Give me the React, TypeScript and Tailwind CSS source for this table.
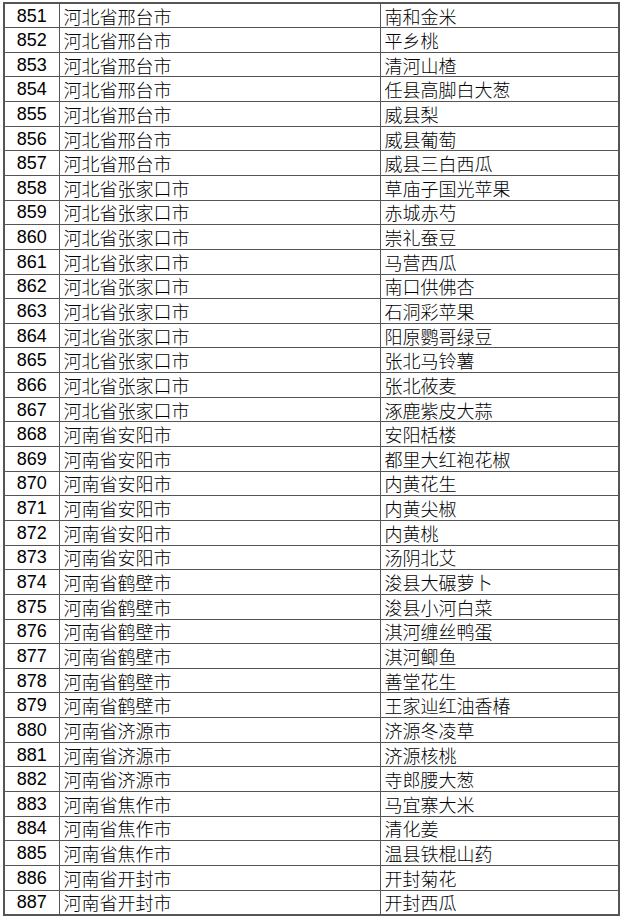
import React from 'react';

const rows: [number, string, string][] = [
    [851, '河北省邢台市', '南和金米'],
    [852, '河北省邢台市', '平乡桃'],
    [853, '河北省邢台市', '清河山楂'],
    [854, '河北省邢台市', '任县高脚白大葱'],
    [855, '河北省邢台市', '威县梨'],
    [856, '河北省邢台市', '威县葡萄'],
    [857, '河北省邢台市', '威县三白西瓜'],
    [858, '河北省张家口市', '草庙子国光苹果'],
    [859, '河北省张家口市', '赤城赤芍'],
    [860, '河北省张家口市', '崇礼蚕豆'],
    [861, '河北省张家口市', '马营西瓜'],
    [862, '河北省张家口市', '南口供佛杏'],
    [863, '河北省张家口市', '石洞彩苹果'],
    [864, '河北省张家口市', '阳原鹦哥绿豆'],
    [865, '河北省张家口市', '张北马铃薯'],
    [866, '河北省张家口市', '张北莜麦'],
    [867, '河北省张家口市', '涿鹿紫皮大蒜'],
    [868, '河南省安阳市', '安阳栝楼'],
    [869, '河南省安阳市', '都里大红袍花椒'],
    [870, '河南省安阳市', '内黄花生'],
    [871, '河南省安阳市', '内黄尖椒'],
    [872, '河南省安阳市', '内黄桃'],
    [873, '河南省安阳市', '汤阴北艾'],
    [874, '河南省鹤壁市', '浚县大碾萝卜'],
    [875, '河南省鹤壁市', '浚县小河白菜'],
    [876, '河南省鹤壁市', '淇河缠丝鸭蛋'],
    [877, '河南省鹤壁市', '淇河鲫鱼'],
    [878, '河南省鹤壁市', '善堂花生'],
    [879, '河南省鹤壁市', '王家辿红油香椿'],
    [880, '河南省济源市', '济源冬凌草'],
    [881, '河南省济源市', '济源核桃'],
    [882, '河南省济源市', '寺郎腰大葱'],
    [883, '河南省焦作市', '马宜寨大米'],
    [884, '河南省焦作市', '清化姜'],
    [885, '河南省焦作市', '温县铁棍山药'],
    [886, '河南省开封市', '开封菊花'],
    [887, '河南省开封市', '开封西瓜'],
];

const App: React.FC = () => {
    return (
        <div className="bg-white w-[622px] h-[919px] pt-[2px] pl-[3px] text-black">
            <table className="w-[615px] border-collapse table-fixed border-2 border-[#555]">
                <colgroup>
                    <col className="w-[55px]" />
                    <col className="w-[321px]" />
                    <col className="w-[239px]" />
                </colgroup>
                <tbody>
                    {rows.map(([no, place, product]) => (
                        <tr key={no} className="h-[24.65px]">
                            <td className="border border-[#555] p-0">
                                <div className="flex justify-center text-[18px] leading-none font-['Liberation_Sans',Arial,sans-serif]">
                                    {no}
                                </div>
                            </td>
                            <td className="border border-[#555] py-0 pl-[4px] text-[18px] leading-none font-light font-['Noto_Sans_CJK_SC',sans-serif]">
                                {place}
                            </td>
                            <td className="border border-[#555] py-0 pl-[4px] text-[18px] leading-none font-light font-['Noto_Sans_CJK_SC',sans-serif]">
                                {product}
                            </td>
                        </tr>
                    ))}
                </tbody>
            </table>
        </div>
    );
};

export default App;
